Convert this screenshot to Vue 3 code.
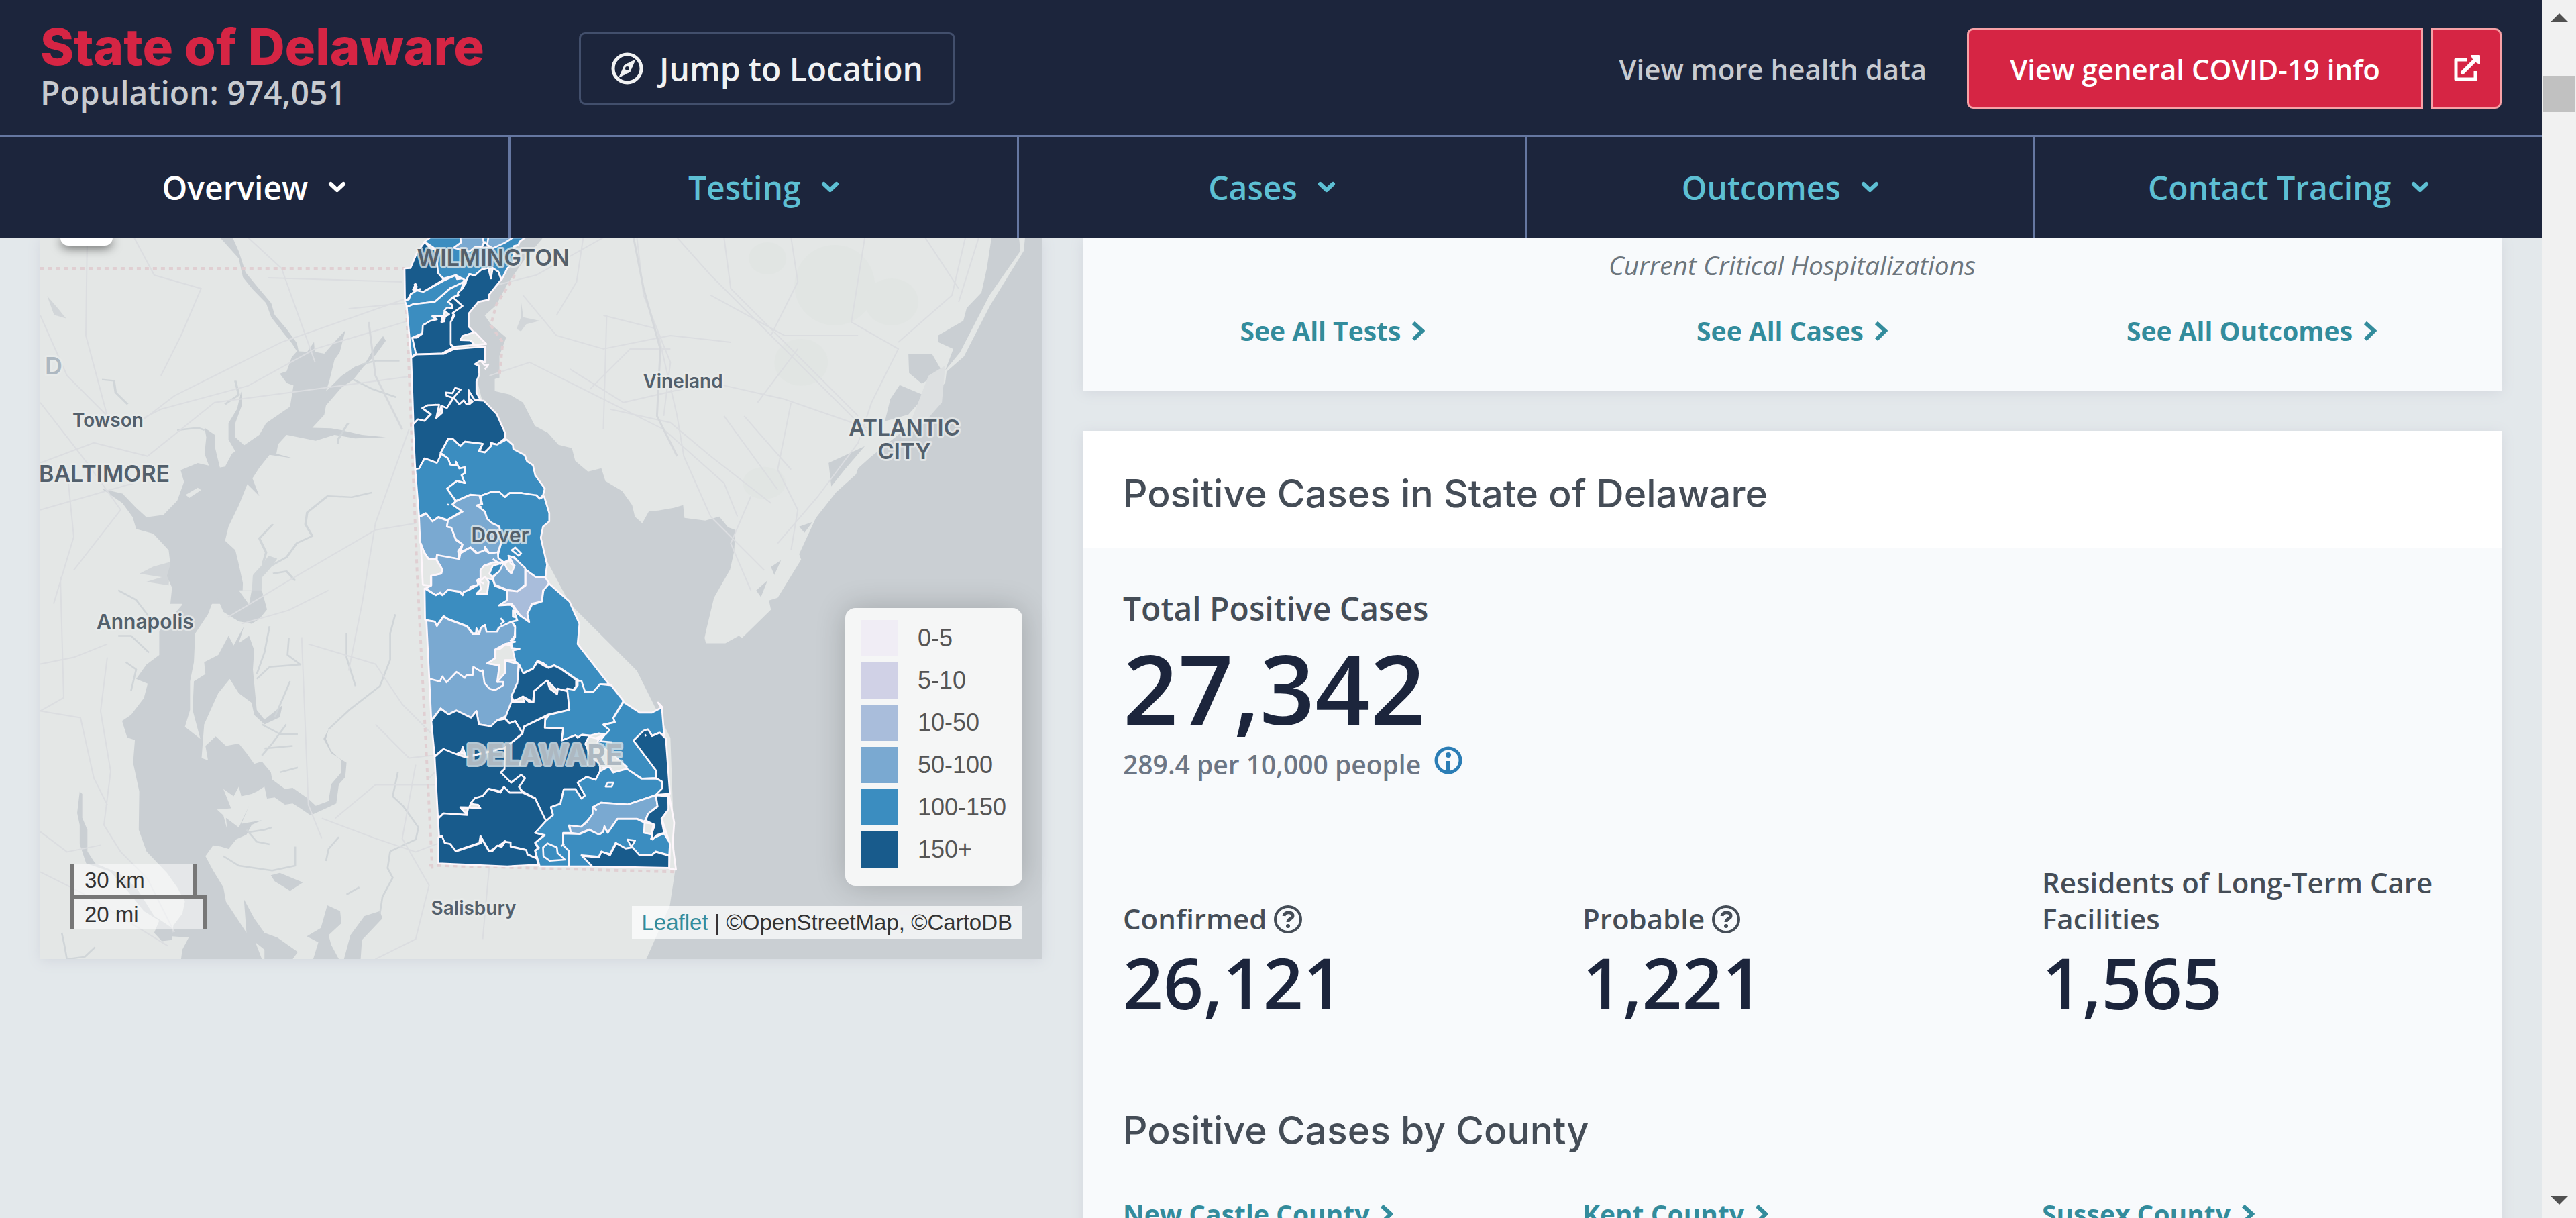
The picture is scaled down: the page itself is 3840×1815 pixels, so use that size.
<script setup>
const tabs = ['Overview', 'Testing', 'Cases', 'Outcomes', 'Contact Tracing']

const summaries = [
  { note: '', link: 'See All Tests' },
  { note: 'Current Critical Hospitalizations', link: 'See All Cases' },
  { note: '', link: 'See All Outcomes' },
]

const stats = [
  { label: 'Confirmed', value: '26,121', help: true },
  { label: 'Probable', value: '1,221', help: true },
  { label: 'Residents of Long-Term Care Facilities', value: '1,565', help: false },
]

const counties = ['New Castle County', 'Kent County', 'Sussex County']

const legend = [
  { label: '0-5', tone: 'tone-0' },
  { label: '5-10', tone: 'tone-1' },
  { label: '10-50', tone: 'tone-2' },
  { label: '50-100', tone: 'tone-3' },
  { label: '100-150', tone: 'tone-4' },
  { label: '150+', tone: 'tone-5' },
]

// ZIP areas, northern half of the state
const northAreas = [
  { tone: 'mid', d: 'M160 60L185 42L610 42L585 60L580 75L560 80L560 150L530 180L505 230L490 195L460 180L410 190L385 210L360 205L345 235L300 210L245 225L218 200L215 150L205 90Z' },
  { tone: 'light', d: 'M320 42L420 42L425 65L415 85L385 85L360 105L335 100L290 88L322 65Z' },
  { tone: 'light', d: 'M445 42L555 42L520 65L465 90L440 75Z' },
  { tone: 'dark', d: 'M430 62L450 85L415 87Z' },
  { tone: 'dark', d: 'M160 62L125 110L97 178L70 180L72 320L85 318L98 295L130 280L155 285L245 230L220 200L215 150L208 95L185 90Z' },
  { tone: 'mid', d: 'M72 325L80 352L110 340L205 330L275 268L345 240L330 225L305 228L300 210L245 235L155 285L125 278L120 250L108 275L125 278L98 295L90 318Z' },
  { tone: 'mid', d: 'M80 352L110 340L205 330L275 270L335 240L325 270L330 275L305 300L285 310L265 330L285 345L285 355L250 370L240 420L195 395L215 410L155 432L150 470L105 490L122 560L100 578Z' },
  { tone: 'dark', d: 'M105 490L125 490L150 472L152 435L185 415L215 408L195 393L240 393L235 420L248 417L252 395L270 385L248 370L260 355L285 358L282 342L265 330L287 310L330 348L290 385L278 420L278 522L290 532L240 560L122 565Z' },
  { tone: 'dark', d: 'M345 240L350 225L360 205L385 212L415 185L445 178L457 225L465 178L490 195L503 230L447 300L447 320L400 330L357 382L357 440L380 465L435 518L290 530L277 520L277 420L295 390L285 380L330 348L287 310L312 300L308 290L330 270Z' },
  { tone: 'none', d: 'M385 465L435 518L385 522L365 502L320 500L330 482Z' },
  { tone: 'dark', d: 'M100 580L122 565L245 562L295 540L430 530L430 600L410 592L385 608L402 615L405 655L392 685L392 735L410 768L380 770L368 752L357 725L360 785L310 788L290 755L260 805L235 795L215 850L210 790L150 805L185 832L160 862L110 875Z' },
  { tone: 'dark', d: 'M108 878L130 855L160 862L188 832L150 805L175 792L225 790L212 850L240 825L235 795L260 805L290 760L258 750L255 735L285 738L297 715L322 722L290 758L315 788L335 770L345 785L360 788L375 775L357 760L358 728L385 770L425 772L483 832L520 915L520 940L485 968L457 960L455 980L430 1003L405 1000L420 965L340 955L320 975L285 942L265 942L232 1005L228 1030L215 1050L160 1030L135 1075L118 1078Z' },
  { tone: 'mid', d: 'M232 1005L267 942L285 942L320 975L340 955L420 965L402 997L430 1003L457 975L457 963L485 968L527 945L555 970L557 988L608 1015L618 1042L645 1060L655 1105L698 1165L690 1195L675 1210L660 1195L630 1198L595 1185L540 1185L520 1203L492 1178L460 1180L410 1198L365 1192L300 1220L260 1165L305 1130L340 1140L325 1105L340 1095L340 1070L315 1075L300 1045L302 1060L275 1058L265 1030Z' },
  { tone: 'mid', d: 'M118 1078L135 1075L160 1030L215 1050L235 1010L265 1030L275 1058L302 1060L300 1045L315 1075L340 1070L340 1095L325 1105L340 1140L305 1130L260 1165L300 1222L285 1235L330 1265L262 1305L222 1292L195 1312L165 1275L135 1290Z' },
  { tone: 'light', d: 'M135 1292L168 1278L195 1312L222 1293L265 1310L260 1335L280 1340L300 1395L330 1415L310 1445L315 1480L215 1465L212 1482L178 1480L155 1445L140 1405Z' },
  { tone: 'light', d: 'M300 1222L365 1193L405 1195L415 1235L395 1240L430 1268L440 1300L460 1318L495 1335L505 1400L488 1450L450 1455L430 1425L428 1445L395 1452L365 1428L320 1450L330 1415L300 1392L280 1340L260 1335L265 1305L330 1268L285 1237Z' },
  { tone: 'mid', d: 'M410 1198L460 1180L492 1178L520 1203L540 1185L595 1185L660 1195L675 1210L695 1200L718 1275L718 1312L690 1335L680 1385L708 1505L700 1565L660 1563L612 1528L560 1470L520 1500L485 1475L505 1400L495 1335L460 1318L440 1300L430 1268L395 1240L418 1235Z' },
]

// ZIP areas, southern half of the state
const southAreas = [
  { tone: 'light', d: 'M215 82L315 100L320 75L365 48L392 75L430 60L450 75L488 70L490 95L515 115L465 115L425 130L410 150L410 185L395 195L400 215L365 225L360 240L335 248L330 262L318 245L265 238L240 262L230 250L210 262L165 232L190 218L190 175L235 165L240 148L215 105Z' },
  { tone: 'none', d: 'M143 30L160 75L178 100L212 102L240 148L232 165L188 175L188 220L152 215Z' },
  { tone: 'light', d: 'M515 115L530 145L548 165L563 130L545 120L535 85L560 95L610 140L610 215L575 245L530 238L475 215L465 185L490 155Z' },
  { tone: 'mid', d: 'M465 130L515 115L495 155L462 180L450 165Z' },
  { tone: 'pale', d: 'M612 148L660 182L700 182L715 205L710 235L690 240L685 290L640 300L620 345L628 380L590 355L550 300L490 308L528 285L530 240L575 245L612 218Z' },
  { tone: 'mid', d: 'M160 232L210 262L230 252L240 262L265 238L318 248L330 262L335 248L365 235L400 215L425 185L465 190L475 220L528 240L528 285L492 308L545 305L580 340L555 330L555 358L572 362L570 380L550 380L490 410L485 425L437 425L430 395L412 408L405 432L392 410L390 432L375 432L350 400L265 368L245 355L215 397L205 380L162 372Z' },
  { tone: 'none', d: 'M430 180L447 202L440 256L392 255L412 235L405 200Z' },
  { tone: 'mid', d: 'M717 210L808 290L853 390L845 480L985 660L945 660L915 695L878 695L860 650L835 635L770 590L740 575L715 585L690 565L665 555L645 590L600 610L583 572L555 550L548 470L565 450L565 400L550 380L575 375L560 330L590 355L628 382L620 345L640 305L685 290L692 240Z' },
  { tone: 'light', d: 'M168 375L205 380L215 400L245 358L265 370L350 402L375 435L405 435L412 408L430 395L437 425L485 425L495 405L550 380L565 405L563 445L545 465L565 470L520 480L475 505L475 545L440 567L490 575L520 555L580 570L575 655L548 715L550 740L530 800L485 822L457 848L403 840L392 780L368 810L303 778L267 795L232 768L190 822Z' },
  { tone: 'line', d: 'M180 635L228 648L240 625L258 652L303 605L340 632L348 618L375 620L378 582L410 602L420 598L428 655L450 680L475 687L512 665L512 650L485 650' },
  { tone: 'none', d: 'M475 507L500 500L520 482L545 485L548 498L585 502L555 510L565 552L520 552L520 610L485 650L495 575L440 567L475 545Z' },
  { tone: 'dark', d: 'M583 572L602 612L645 592L665 560L690 575L715 587L740 577L770 592L838 640L838 670L825 685L755 690L710 645L675 670L650 690L645 740L600 715L560 735L548 715L575 655Z' },
  { tone: 'dark', d: 'M548 740L560 738L605 740L600 715L628 740L648 740L650 692L675 670L708 643L720 680L753 705L757 680L800 692L808 775L715 795L605 850L598 880L565 825L540 835L520 812Z' },
  { tone: 'mid', d: 'M798 680L830 685L845 665L845 645L862 645L878 695L915 695L945 660L995 665L1050 735L1005 810L1015 830L960 840L990 865L970 885L940 880L900 890L865 885L845 900L835 888L773 912L780 858L698 855L700 820L718 797L808 775Z' },
  { tone: 'mid', d: 'M1050 740L1123 787L1178 787L1220 765L1205 742L1222 760L1232 890L1210 877L1178 890L1157 862L1095 912L1195 1045L1195 1080L1133 1083L1085 1052L1005 1055L985 1025L960 1030L930 900L970 885L988 865L960 842L1012 830L1005 812Z' },
  { tone: 'dark', d: 'M1095 912L1140 868L1160 862L1178 892L1213 877L1240 903L1258 1150L1195 1155L1222 1125L1220 1095L1195 1080L1195 1045Z' },
  { tone: 'dark', d: 'M190 825L232 770L267 795L303 778L368 810L392 780L403 840L457 848L485 822L520 815L540 835L565 825L598 880L520 945L345 985L330 940L325 960L300 975L245 950L205 982Z' },
  { tone: 'dark', d: 'M205 985L245 950L300 972L345 988L520 945L518 1040L502 1055L547 1100L592 1065L610 1080L583 1120L598 1145L540 1145L515 1120L500 1140L447 1128L420 1160L368 1190L360 1210L320 1212L350 1245L245 1238L220 1262Z' },
  { tone: 'dark', d: 'M598 882L605 850L700 805L698 855L780 858L773 912L835 888L845 900L860 888L900 890L880 930L945 1000L945 1050L925 1088L885 1075L845 1100L878 1158L862 1172L835 1130L783 1130L768 1195L725 1210L735 1245L715 1270L700 1272L655 1170L598 1140L583 1120L610 1080L592 1065L547 1100L502 1055L518 1040L520 945Z' },
  { tone: 'dark', d: 'M220 1262L245 1238L350 1245L320 1210L410 1215L400 1200L365 1195L385 1170L420 1160L447 1128L500 1145L515 1120L540 1145L598 1145L655 1172L705 1275L655 1325L695 1335L655 1370L668 1395L655 1405L660 1440L620 1420L610 1400L545 1385L520 1362L490 1385L450 1408L410 1340L405 1370L300 1405L250 1370L235 1340L225 1345Z' },
  { tone: 'none', d: 'M320 1212L355 1215L348 1243Z' },
  { tone: 'dark', d: 'M222 1345L238 1340L250 1370L275 1375L300 1408L415 1370L410 1340L448 1408L465 1405L485 1382L505 1388L520 1365L545 1368L545 1387L615 1402L620 1422L662 1440L670 1468L530 1475L222 1462Z' },
  { tone: 'mid', d: 'M945 1050L985 1028L1005 1055L1060 1035L1085 1052L1130 1083L1195 1082L1222 1095L1222 1128L1195 1155L1070 1198L950 1190L920 1210L912 1248L880 1280L860 1300L805 1292L815 1325L780 1325L780 1380L805 1405L805 1475L675 1475L655 1405L672 1392L655 1370L698 1335L655 1325L700 1275L735 1245L725 1210L768 1195L783 1130L835 1130L862 1172L878 1158L845 1100L885 1075L925 1088Z' },
  { tone: 'none', d: 'M880 925L895 895L940 905L930 930L985 960L1065 1030L1060 1040L1005 1055L985 1025L960 1030L900 980Z' },
  { tone: 'light', d: 'M912 1240L912 1210L950 1190L1070 1198L1195 1157L1203 1205L1160 1240L1145 1275L1110 1262L1023 1262L980 1325L965 1295L960 1320L940 1335L897 1310L850 1330L815 1325L808 1292L860 1298L885 1278Z' },
  { tone: 'mid', d: 'M780 1328L855 1330L897 1312L942 1333L960 1320L965 1300L980 1325L1023 1263L1110 1263L1145 1280L1145 1325L1175 1330L1180 1350L1232 1328L1258 1370L1255 1425L1195 1408L1175 1425L1120 1425L1090 1390L1060 1395L1015 1370L990 1420L950 1410L940 1432L862 1425L910 1475L807 1475L805 1405L780 1380Z' },
  { tone: 'dark', d: 'M865 1428L940 1435L952 1408L990 1425L1018 1372L1060 1395L1090 1390L1122 1425L1175 1425L1195 1410L1255 1428L1255 1482L910 1475Z' },
  { tone: 'dark', d: 'M1195 1157L1250 1160L1252 1220L1220 1262L1232 1325L1200 1335L1180 1355L1178 1325L1190 1290L1150 1270L1160 1240L1203 1208Z' },
  { tone: 'none', d: 'M1145 1280L1185 1285L1175 1330L1142 1325Z' },
  { tone: 'none', d: 'M1255 1160L1277 1280L1270 1375L1285 1490L1255 1485L1258 1375L1222 1262L1252 1220Z' },
  { tone: 'mid', d: 'M690 1390L710 1372L752 1390L755 1415L788 1445L720 1450L692 1430Z' },
  { tone: 'mid', d: 'M970 1118L980 1100L1005 1100L998 1118Z' },
  { tone: 'mid', d: 'M550 60L565 48L592 75L580 85Z' },
  { tone: 'dark', d: 'M1068 1355L1102 1360L1085 1388Z' },
]
</script>

<template>
  <div class="page">
    <div class="content">
      <header class="top">
        <div class="bar">
          <div class="brand">
            <h1>State of Delaware</h1>
            <p>Population: 974,051</p>
          </div>
          <button type="button" class="jump">
            <svg viewBox="0 0 48 48" aria-hidden="true">
              <circle cx="24" cy="24" r="21" fill="none" stroke="currentColor" stroke-width="5" />
              <path d="M36 11L28 29L12 37L20 19Z" fill="currentColor" stroke="currentColor" stroke-width="1" stroke-linejoin="round" />
              <circle cx="24" cy="24" r="3" class="hub" />
            </svg>
            Jump to Location
          </button>
          <div class="actions">
            <a href="#" class="more">View more health data</a>
            <div class="pair">
              <button type="button" class="info">View general COVID-19 info</button>
              <button type="button" class="external" aria-label="Open in new window">
                <svg viewBox="0 0 42 42" aria-hidden="true">
                  <path d="M22 8H5V37H34V25" fill="none" stroke="currentColor" stroke-width="5" stroke-linejoin="round" />
                  <path d="M15 27L35 7" fill="none" stroke="currentColor" stroke-width="6" stroke-linecap="round" />
                  <path d="M27 1H40Q41 1 41 2V15L36 13L29 6Z" fill="currentColor" />
                </svg>
              </button>
            </div>
          </div>
        </div>
        <nav class="tabs">
          <a v-for="(tab, i) in tabs" :key="tab" href="#" class="tab" :class="{ active: i === 0 }">
            {{ tab }}
            <svg viewBox="0 0 27 18" aria-hidden="true">
              <path d="M4 4L13.500 13L23 4" fill="none" stroke="currentColor" stroke-width="6" stroke-linecap="round" stroke-linejoin="round" />
            </svg>
          </a>
        </nav>
      </header>

      <main class="columns">
        <section class="map" aria-label="Case map">
          <svg class="canvas" viewBox="60 354 1495 1076">
            <rect x="60" y="354" width="1495" height="1076" class="land" />

            <!-- wooded patches -->
            <g class="woods">
              <ellipse cx="1245" cy="425" rx="60" ry="60" />
              <ellipse cx="1330" cy="450" rx="40" ry="35" />
              <ellipse cx="1140" cy="720" rx="32" ry="24" />
              <ellipse cx="1195" cy="540" rx="40" ry="35" />
              <ellipse cx="1145" cy="385" rx="28" ry="24" />
            </g>

            <!-- Delaware Bay and the Atlantic -->
            <path class="water" d="M810 354L780 390L757 423L740 455L723 470L732 483L755 503L745 530L745 563L738 565L738 583L760 588L780 600L798 635L817 645L833 663L853 668L858 687L877 703L897 698L903 717L928 732L943 753L947 770L958 780L968 762L982 761L1005 757L1019 753L1021 772L1052 776L1073 770L1086 786L1097 790L1095 822L1089 849L1065 891L1054 937L1051 951L1053 959L1082 959L1102 948L1107 951L1150 909L1147 895L1160 891L1195 834L1192 826L1217 772L1247 734L1277 707L1280 698L1299 681L1381 615L1396 590L1410 570L1412 554L1438 531L1477 455L1527 374L1529 354L1555 354L1555 1430L964 1430L999 1351L1007 1298L1000 1100L950 1000L850 900L770 750L720 600L690 480L740 400L783 354Z" />
            <path class="water" d="M1479 354L1472 400L1464 436L1442 459L1437 478L1399 500L1400 510L1422 520L1410 552L1432 525L1476 440L1522 374L1520 354Z" />
            <path class="water" d="M1355 527L1390 527L1405 553L1375 572L1356 556Z" />
            <path class="water" d="M1342 574L1380 590L1355 618L1320 628L1328 595Z" />
            <path class="water" d="M1236 690L1290 665L1260 700L1240 725ZM1192 785L1212 778L1200 794ZM1150 845L1165 835L1155 857ZM1128 880L1145 865L1135 890Z" />
            <path class="islet" d="M1385 560L1410 545L1405 600L1370 640L1360 625Z" />

            <!-- Chesapeake Bay, upper part -->
            <g transform="translate(50 350) scale(.5102 .3508)">
              <path class="water" d="M545 11L582 11L600 70L620 160L660 230L695 290L705 340L740 400L770 460L775 495L800 497L820 455L822 497L850 505L880 455L912 405L895 500L880 530L865 620L855 665L900 600L940 560L970 545L1000 470L1022 430L1030 450L1000 510L965 560L935 615L900 650L855 725L850 765L815 820L870 822L900 830L960 850L1030 860L940 865L880 850L825 875L740 850L715 890L710 930L760 950L690 935L660 990L640 1035L660 1110L625 1060L600 1150L570 1240L560 1300L590 1340L600 1400L612 1480L610 1568L400 1568L405 1500L390 1450L400 1400L395 1340L350 1270L300 1250L290 1200L260 1140L200 1080L260 1100L300 1160L330 1200L380 1190L420 1130L440 1050L430 1000L480 970L540 990L560 985L580 930L620 890L660 850L680 800L750 730L760 640L740 630L720 590L740 580L755 520L770 495L755 460L735 425L695 350L680 290L640 230L612 180L600 100Z" />
              <path class="water" d="M500 820L530 850L530 900L545 990L515 990L500 930L505 860Z" />
              <path class="water" d="M607 665L610 720L590 800L590 860L620 900L590 920L570 870L570 800L595 740Z" />
              <path class="water" d="M1425 280L1432 350L1480 365L1440 380L1425 410L1412 400L1425 350ZM400 1390L350 1410L310 1440L375 1455L330 1475L395 1490ZM40 260L70 310L95 355L60 340Z" opacity="0.7" />
              <path class="river wide" d="M700 1370L680 1410L655 1450L650 1568" />
              <path class="river" d="M990 1095L930 1115L860 1110L800 1180L795 1230L815 1280L770 1310L740 1370L690 1410" />
              <path class="river" d="M935 615L990 655L1060 690M960 550L1000 535L1070 535M200 615L235 620L240 670L275 720M920 800L890 870L890 890M420 830L480 820L500 830M700 1230L660 1290L680 1350L670 1400M700 1440L740 1430L765 1470M590 620L600 680L560 720" />
              <path class="island" d="M445 1105L480 1075L490 1085L455 1118Z" />
            </g>

            <!-- Chesapeake Bay, lower part -->
            <g transform="translate(50 880) scale(.3827 .3571)">
              <path class="water" d="M540 0L575 30L580 60L490 170L490 270L440 310L400 370L445 390L430 450L380 520L345 545L365 615L395 625L388 720L412 840L410 1000L440 1090L520 1180L560 1240L590 1300L580 1350L545 1400L540 1445L605 1450L580 1500L575 1540L890 1540L865 1470L900 1500L900 1540L1010 1540L1030 1510L950 1450L900 1430L860 1370L820 1290L830 1430L750 1300L740 1240L700 1170L670 1110L700 1065L730 1070L760 1080L790 1040L830 1020L850 980L890 960L810 975L840 900L800 990L750 950L755 1000L740 940L715 915L770 910L740 830L780 860L800 820L810 860L850 850L870 840L900 820L910 870L940 865L980 895L1010 890L1040 910L1080 940L1140 910L1180 890L1190 810L1215 780L1220 720L1160 680L1140 640L1130 620L1150 580L1140 620L1160 670L1200 710L1200 760L1160 810L1150 880L1100 900L1070 870L1010 825L980 830L930 790L925 760L890 715L860 725L830 680L800 640L750 650L710 610L670 650L680 710L655 700L665 560L690 500L720 430L765 370L800 430L850 470L860 520L900 560L960 530L970 480L900 540L870 500L855 330L860 250L840 190L800 220L820 150L780 230L760 190L720 270L665 300L670 350L625 380L620 500L650 620L590 570L610 500L610 380L625 300L630 180L680 100L710 15L740 90L800 130L850 140L880 120L910 80L890 0Z" />
              <path class="island" d="M740 480L770 400L800 480L830 500L800 560L850 660L800 590L790 540L740 590L715 560ZM800 0L850 0L840 60Z" />
              <path class="water" d="M180 840L170 930L180 980L180 1060L205 1140L300 1175L370 1260L430 1340L490 1380L470 1430L500 1465L540 1460L540 1410L470 1360L400 1240L330 1180L240 1140L210 1090L210 1000L190 950L190 850Z" />
              <path class="water" d="M925 1190L960 1180L1050 1220L1000 1255L940 1215ZM1145 1315L1195 1340L1200 1390L1150 1440L1160 1480L1190 1540L1090 1540L1110 1470L1065 1445L1120 1410ZM1350 1340L1290 1360L1235 1440L1210 1540L1275 1540L1280 1460L1360 1370Z" />
              <path class="river" d="M1150 580L1230 500L1290 450L1350 400L1390 290L1390 180L1410 100M1220 180L1220 280L1255 400M985 560L930 640L890 690M1000 380L960 480L940 530M1390 1090L1380 1160L1400 1200L1360 1280L1350 1350M1390 1090L1490 1040L1500 990L1440 900L1400 860L1420 760M920 150L900 260L870 350M995 200L990 270L1040 310L920 320L870 370M1030 740L960 760M330 190L380 190L450 260M360 300L400 330L380 420M330 0L400 40L450 110M110 1430L120 1480L130 1540L200 1530L240 1490M1020 1070L1020 1150L930 1170L800 1150L740 1110M1190 1030L1150 1080L1140 1130M890 560L960 600L1030 600M900 660L1010 650M840 1010L900 1000L930 990M830 1000L870 1050L920 1060M1270 1240L1220 1270" />
            </g>

            <!-- roads -->
            <g class="road">
              <path d="M60 470L100 560L180 640L240 610L370 575L470 520L620 475M60 600L130 690L180 760L110 850M195 640L260 590L420 510L620 440M130 354L128 500L160 620M200 354L230 410L300 430L270 500L240 560M370 354L420 400L470 540M60 690L140 660L220 680L320 600L620 560M60 760L200 720M100 700L110 800L80 900M400 414L600 420M520 460L620 450M610 640L560 780L540 900L520 1000M620 780L560 790L440 860L340 920" />
              <path d="M60 990L110 980L160 960M90 860L95 1040L60 1060M160 980L150 1060L165 1150L155 1230L180 1270L220 1310L260 1390M60 1060L120 1070L140 1160L160 1200M60 1240L100 1270L150 1260M60 1300L120 1330L250 1410M450 950L460 1200L480 1250M460 960L560 990L600 1050L650 1100M500 1220L560 1170L650 1170M480 1220L560 1250L620 1270L700 1240L720 1180M560 1080L610 1130L700 1120M490 880L430 910L360 930M620 1140L600 1250L640 1320L620 1400L560 1430M640 1160L700 1100M730 1290L720 1400" />
              <path d="M720 430L800 410L900 354M780 440L830 500L900 520L1000 500L1090 510M730 560L790 540L870 580L990 640L1080 720L1100 770M850 550L930 600L1060 570L1170 595L1300 640M900 470L980 490L1010 620L1020 680L1060 770L1140 850M1010 354L1060 410L1110 460L1240 590L1300 650M950 354L960 440L1000 540L990 620M1080 354L1090 430L1160 500L1280 620M1180 600L1160 700L1190 760L1180 820M1110 620L1180 700M910 610L1000 630L1060 680L1150 750M1060 440L1170 500L1280 500M1180 354L1190 420L1150 500M1290 354L1270 480L1340 520L1300 600L1280 660L1220 740L1160 810M1440 354L1420 440L1340 510M1380 354L1430 430M870 354L860 420L830 470M905 470L900 640M880 580L940 520L1000 520M1080 620L1160 730M1190 520L1130 600M1120 740L1090 810L1120 880M1460 354L1430 450" />
              <path d="M945 354L960 430L985 520L980 620L1010 680M550 480L560 560L600 640" class="main" />
            </g>

            <!-- state border -->
            <path class="border" d="M60 400H604M606 450L622 850L645 1300M640 1290L1010 1300M768 410L740 455L732 485L750 510L745 560" />

            <g transform="translate(580 340) scale(.3333)">
              <path v-for="area in northAreas" :key="area.d" :class="['zip', area.tone]" :d="area.d" />
              <path class="zip line" d="M410 592L430 615L445 610L430 632M112 250L125 262L118 278L142 272M390 1240L415 1248M262 1235L268 1238M335 235L345 245L325 270" />
            </g>
            <g transform="translate(580 800) scale(.3333)">
              <path v-for="area in southAreas" :key="area.d" :class="['zip', area.tone]" :d="area.d" />
              <path class="zip line" d="M465 100L500 122L545 100L560 130M425 130L462 120M395 195L425 210M500 365L515 380L500 392M320 965L345 975M1145 885L1152 892M940 905L968 885L945 915L1000 920M1170 1350L1185 1355M915 1210L930 1225M770 1385L785 1375" />
            </g>

            <g class="labels">
              <text x="622" y="396" font-size="34">WILMINGTON</text>
              <text x="959" y="578" font-size="28">Vineland</text>
              <text x="1349" y="649" font-size="33" text-anchor="middle">ATLANTIC</text>
              <text x="1349" y="684" font-size="33" text-anchor="middle">CITY</text>
              <text x="108" y="636" font-size="28">Towson</text>
              <text x="58" y="718" font-size="34">BALTIMORE</text>
              <text x="703" y="808" font-size="30">Dover</text>
              <text x="144" y="937" font-size="30">Annapolis</text>
              <text x="643" y="1364" font-size="28">Salisbury</text>
              <text x="696" y="1141" font-size="42" class="region strong">DELAWARE</text>
              <text x="67" y="558" font-size="36" class="region">D</text>
            </g>
          </svg>

          <div class="zoom"></div>

          <div class="scale">
            <div class="km">30 km</div>
            <div class="mi">20 mi</div>
          </div>

          <div class="overlays">
            <ul class="legend">
              <li v-for="item in legend" :key="item.label">
                <i :class="item.tone"></i>{{ item.label }}
              </li>
            </ul>
            <p class="credit"><a href="#">Leaflet</a> | ©OpenStreetMap, ©CartoDB</p>
          </div>
        </section>

        <div class="cards">
          <section class="card summary">
            <div v-for="item in summaries" :key="item.link" class="cell">
              <em>{{ item.note }}</em>
              <a href="#" class="link">
                {{ item.link }}
                <svg viewBox="0 0 21 33" aria-hidden="true"><path d="M4 4L17 16L4 29" /></svg>
              </a>
            </div>
          </section>

          <section class="card">
            <h2 class="head">Positive Cases in State of Delaware</h2>
            <div class="body">
              <h3>Total Positive Cases</h3>
              <p class="total">27,342</p>
              <p class="rate">
                289.4 per 10,000 people
                <svg viewBox="0 0 42 42" aria-hidden="true">
                  <circle cx="21" cy="21" r="18" fill="none" stroke="currentColor" stroke-width="5" />
                  <circle cx="21" cy="13" r="4" fill="currentColor" />
                  <path d="M21 22V37" stroke="currentColor" stroke-width="6" />
                </svg>
              </p>

              <div class="grid stats">
                <div v-for="stat in stats" :key="stat.label" class="stat">
                  <p class="label">
                    {{ stat.label }}
                    <svg v-if="stat.help" viewBox="0 0 42 42" aria-hidden="true">
                      <circle cx="21" cy="21" r="19" fill="none" stroke="currentColor" stroke-width="4" />
                      <path d="M15 16C16 9 28 9 28 16C28 20 21 20 21 25" fill="none" stroke="currentColor" stroke-width="5" />
                      <circle cx="21" cy="31" r="3" fill="currentColor" />
                    </svg>
                  </p>
                  <p class="value">{{ stat.value }}</p>
                </div>
              </div>

              <h2 class="sub">Positive Cases by County</h2>
              <div class="grid">
                <a v-for="county in counties" :key="county" href="#" class="link">
                  {{ county }}
                  <svg viewBox="0 0 21 33" aria-hidden="true"><path d="M4 4L17 16L4 29" /></svg>
                </a>
              </div>
            </div>
          </section>
        </div>
      </main>
    </div>

    <div class="scrollbar" aria-hidden="true">
      <span class="arrow up"></span>
      <span class="thumb"></span>
      <span class="arrow down"></span>
    </div>
  </div>
</template>

<style>
body {
  margin: 0;
  overflow: hidden;
}
</style>

<style scoped>
.page {
  display: flex;
  height: 100vh;
  overflow: hidden;
  background: #e3e8eb;
  font-family: "Open Sans", "Noto Sans", sans-serif;
  font-weight: 600;
  color: #454d57;
}

.page * {
  box-sizing: border-box;
}

h1,
h2,
h3,
p,
ul {
  margin: 0;
  padding: 0;
}

a {
  text-decoration: none;
}

button {
  font: inherit;
  color: inherit;
  cursor: pointer;
}

.content {
  display: flex;
  flex: 1;
  flex-direction: column;
  min-width: 0;
}

.top {
  flex: none;
  background: #1c253c;
}

.bar {
  display: flex;
  align-items: center;
  height: 204px;
  padding: 3px 60px 0;
  border-bottom: 3px solid #6577a1;
}

.brand {
  flex: none;
  min-width: 803px;
}

.brand h1 {
  font-family: Inter, sans-serif;
  font-size: 76px;
  font-weight: 800;
  line-height: 66px;
  color: #d62544;
}

.brand p {
  margin-top: 6px;
  font-size: 48px;
  line-height: 60px;
  color: #c8cbd0;
}

.jump {
  display: flex;
  align-items: center;
  gap: 24px;
  height: 108px;
  padding: 0 45px;
  border: 3px solid #424f6c;
  border-radius: 9px;
  background: transparent;
  font-size: 48px;
  color: #f1f2f3;
}

.jump svg {
  width: 48px;
  height: 48px;
}

.hub {
  fill: #1c253c;
}

.actions {
  display: flex;
  align-items: center;
  gap: 60px;
  margin-left: auto;
}

.more {
  font-size: 42px;
  color: #c8cbd0;
}

.pair {
  display: flex;
  gap: 12px;
}

.pair button {
  height: 120px;
  border: 3px solid #f7a1a6;
  background: #d62544;
  font-size: 42px;
  color: #fff;
}

.info {
  padding: 0 61px;
  border-radius: 9px 0 0 9px;
}

.external {
  display: grid;
  place-items: center;
  width: 105px;
  padding: 0;
  border-radius: 0 9px 9px 0;
}

.external svg {
  width: 42px;
  height: 42px;
}

.tabs {
  display: grid;
  grid-template-columns: repeat(5, 1fr);
  height: 150px;
}

.tab {
  display: flex;
  align-items: center;
  justify-content: center;
  gap: 30px;
  font-size: 48px;
  color: #5dbfd3;
}

.tab + .tab {
  border-left: 3px solid #6577a1;
}

.tab.active {
  color: #fff;
}

.tab svg {
  width: 27px;
  height: 18px;
}

.columns {
  display: grid;
  grid-template-columns: 1494fr 2115fr;
  gap: 60px;
  align-items: start;
  flex: 1;
  min-height: 0;
  padding: 0 60px;
  overflow: hidden;
}

.map {
  position: relative;
  box-shadow: 0 3px 18px #d3d7de;
}

.canvas {
  display: block;
  width: 100%;
  overflow: hidden;
}

.land {
  fill: #e4e7e6;
}

.woods {
  fill: #e1e5e3;
}

.water {
  fill: #cacfd3;
}

.islet {
  fill: #dde0e1;
}

.island {
  fill: #e4e7e6;
}

.river {
  fill: none;
  stroke: #d0d5d8;
  stroke-width: 7;
  stroke-linejoin: round;
}

.river.wide {
  stroke-width: 28;
}

.road {
  fill: none;
  stroke: #dbdde0;
  stroke-width: 2;
  stroke-linejoin: round;
}

.road .main {
  stroke: #d5d8db;
  stroke-width: 3;
}

.border {
  fill: none;
  stroke: #e0cfd2;
  stroke-width: 4;
  stroke-dasharray: 6 6;
}

.zip {
  stroke: #fdf6fb;
  stroke-width: 8;
  stroke-linejoin: round;
}

.dark {
  fill: #185b8c;
}

.mid {
  fill: #3b8dc0;
}

.light {
  fill: #7aa9d1;
}

.pale {
  fill: #a9bddb;
}

.none {
  fill: #e4e7e6;
}

.line {
  fill: none;
}

.labels {
  font-family: Inter, sans-serif;
  font-weight: 600;
  fill: #53606c;
  stroke: #e9eceb;
  stroke-opacity: 0.75;
  stroke-width: 6px;
  stroke-linejoin: round;
  paint-order: stroke;
}

.region {
  fill: #adb8c1;
}

.strong {
  font-weight: 700;
}

.zoom {
  position: absolute;
  top: 0;
  left: 30px;
  width: 78px;
  height: 12px;
  border-radius: 0 0 12px 12px;
  background: #fff;
  box-shadow: 0 3px 15px rgba(0, 0, 0, 0.65);
}

.scale {
  position: absolute;
  bottom: 45px;
  left: 45px;
  font-family: "Liberation Sans", sans-serif;
  font-size: 33px;
  font-weight: 400;
  line-height: 36px;
  color: #333;
}

.scale div {
  padding: 6px 15px 3px;
  border: 6px solid #777;
  background: rgba(255, 255, 255, 0.5);
}

.scale .km {
  width: 189px;
  border-width: 0 6px;
}

.scale .mi {
  width: 204px;
  border-bottom: 0;
}

.overlays {
  position: absolute;
  right: 30px;
  bottom: 30px;
  display: flex;
  flex-direction: column;
  align-items: flex-end;
  gap: 30px;
  font-family: "Liberation Sans", sans-serif;
  font-weight: 400;
}

.legend {
  display: grid;
  gap: 9px;
  width: 264px;
  padding: 18px 24px 27px;
  border-radius: 15px;
  background: rgba(255, 255, 255, 0.8);
  box-shadow: 0 0 45px rgba(0, 0, 0, 0.2);
  font-size: 36px;
  line-height: 54px;
  color: #555;
  list-style: none;
}

.legend li {
  display: flex;
  gap: 30px;
  white-space: nowrap;
}

.legend i {
  width: 54px;
  height: 54px;
}

.tone-0 {
  background: #f0edf5;
}

.tone-1 {
  background: #d0d1e6;
}

.tone-2 {
  background: #a9bddb;
}

.tone-3 {
  background: #7aa9d1;
}

.tone-4 {
  background: #3b8dc0;
}

.tone-5 {
  background: #185b8c;
}

.credit {
  padding: 0 15px;
  background: rgba(255, 255, 255, 0.7);
  font-size: 33px;
  line-height: 49px;
  color: #333;
}

.credit a {
  color: #338c9c;
}

.cards {
  display: grid;
  gap: 60px;
}

.card {
  background: #f8fafc;
  box-shadow: 0 3px 18px #d3d7de;
}

.summary,
.grid {
  display: grid;
  grid-template-columns: repeat(3, 1fr);
  gap: 60px;
}

.summary {
  padding: 14px 60px 62px;
}

.cell {
  display: flex;
  flex-direction: column;
  align-items: center;
  gap: 44px;
  line-height: 54px;
}

.cell em {
  height: 54px;
  font-size: 39px;
  font-weight: 500;
  white-space: nowrap;
  color: #6c757d;
}

.link {
  display: flex;
  align-items: center;
  gap: 15px;
  font-size: 39px;
  font-weight: 700;
  line-height: 54px;
  color: #338c9c;
}

.link svg {
  width: 21px;
  height: 33px;
  fill: none;
  stroke: currentColor;
  stroke-width: 6;
}

.head,
.sub {
  font-family: Inter, sans-serif;
  font-size: 57px;
  font-weight: 500;
  line-height: 60px;
}

.head {
  padding: 64px 60px 51px;
  background: #fff;
}

.body {
  padding: 57px 60px;
}

h3 {
  font-size: 48px;
  font-weight: 600;
  line-height: 66px;
}

.total {
  margin-top: 12px;
  font-size: 144px;
  line-height: 144px;
  color: #1c253c;
}

.rate {
  display: flex;
  gap: 20px;
  margin-top: 16px;
  font-size: 39px;
  line-height: 54px;
  color: #6c7685;
}

.rate svg {
  width: 42px;
  height: 42px;
  color: #2b7db5;
}

.stats {
  align-items: end;
  margin: 122px 0 139px;
}

.label {
  font-size: 42px;
  line-height: 54px;
}

.label svg {
  width: 42px;
  height: 42px;
  vertical-align: -6px;
}

.value {
  margin-top: 15px;
  font-size: 105px;
  line-height: 105px;
  color: #1c253c;
}

.sub {
  margin-bottom: 67px;
}

.scrollbar {
  display: flex;
  flex: none;
  flex-direction: column;
  align-items: center;
  width: 51px;
  padding: 20px 0;
  background: #f1f1f1;
}

.arrow {
  border: 13px solid transparent;
}

.up {
  border-top: 0;
  border-bottom-color: #505050;
}

.down {
  margin-top: auto;
  border-bottom: 0;
  border-top-color: #505050;
}

.thumb {
  width: 47px;
  height: 54px;
  margin-top: 80px;
  background: #c1c1c1;
}
</style>
